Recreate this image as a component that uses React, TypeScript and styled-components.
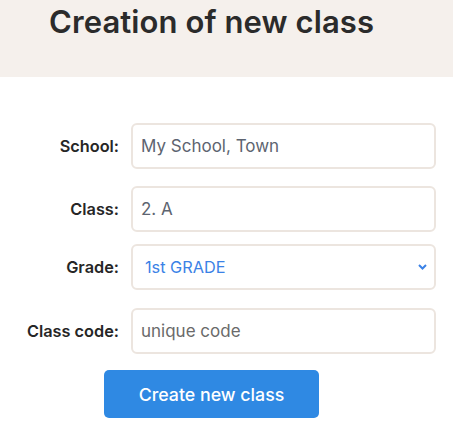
import React from "react";
import styled, { createGlobalStyle } from "styled-components";

const Global = createGlobalStyle`
  html, body { margin: 0; padding: 0; background: #ffffff; }
  body { font-family: Inter, "Open Sans", sans-serif; }
  * { box-sizing: border-box; }
`;

const Header = styled.header`
  height: 77px;
  background: #f5f0ec;
  padding: 3px 0 0 49px;
`;

const Title = styled.h1`
  margin: 0;
  font-family: Inter, sans-serif;
  font-size: 31px;
  line-height: 38px;
  font-weight: 600;
  color: #2b2b2b;
  letter-spacing: 0.1px;
`;

const Form = styled.form`
  display: flex;
  flex-direction: column;
  padding-top: 46px;
`;

const Row = styled.div<{ $gap: number }>`
  display: grid;
  grid-template-columns: 119px 305px;
  column-gap: 12px;
  align-items: center;
  margin-bottom: ${(p) => p.$gap}px;
`;

const Label = styled.label`
  text-align: right;
  white-space: nowrap;
  font-family: Inter, sans-serif;
  font-size: 16.3px;
  font-weight: 600;
  color: #262626;
`;

const Input = styled.input`
  height: 46px;
  width: 100%;
  border: 2px solid #ece5df;
  border-radius: 6px;
  padding: 0 8px;
  font-family: Inter, sans-serif;
  font-size: 17px;
  color: #5d6470;
  background: #fff;
  outline: none;
  &::placeholder { color: #6a6a6a; }
`;

const SelectWrap = styled.div`
  position: relative;
  height: 46px;
`;

const Select = styled.select`
  appearance: none;
  height: 46px;
  width: 100%;
  border: 2px solid #ece5df;
  border-radius: 6px;
  padding: 0 12px;
  font-family: Inter, sans-serif;
  font-size: 16.3px;
  color: #3b82e6;
  background: #fff;
  outline: none;
`;

const Chevron = styled.svg`
  position: absolute;
  right: 9px;
  top: 20px;
  pointer-events: none;
`;

const ButtonRow = styled.div`
  padding-left: 104px;
`;

const Button = styled.button`
  width: 215px;
  height: 48px;
  border: none;
  border-radius: 5px;
  background: #2f89e3;
  color: #ffffff;
  font-family: Inter, sans-serif;
  font-size: 17.8px;
  font-weight: 500;
  cursor: pointer;
`;

export default function App() {
  return (
    <>
      <Global />
      <Header>
        <Title>Creation of new class</Title>
      </Header>
      <Form onSubmit={(e) => e.preventDefault()}>
        <Row $gap={17}>
          <Label>School:</Label>
          <Input defaultValue="My School, Town" />
        </Row>
        <Row $gap={12}>
          <Label>Class:</Label>
          <Input defaultValue="2. A" />
        </Row>
        <Row $gap={18}>
          <Label>Grade:</Label>
          <SelectWrap>
            <Select defaultValue="1">
              <option value="1">1st GRADE</option>
              <option value="2">2nd GRADE</option>
            </Select>
            <Chevron width="9" height="6" viewBox="0 0 9 6">
              <path d="M1 1l3.5 3.5L8 1" fill="none" stroke="#3b82e6" strokeWidth="2" />
            </Chevron>
          </SelectWrap>
        </Row>
        <Row $gap={16}>
          <Label>Class code:</Label>
          <Input placeholder="unique code" />
        </Row>
        <ButtonRow>
          <Button type="submit">Create new class</Button>
        </ButtonRow>
      </Form>
    </>
  );
}
